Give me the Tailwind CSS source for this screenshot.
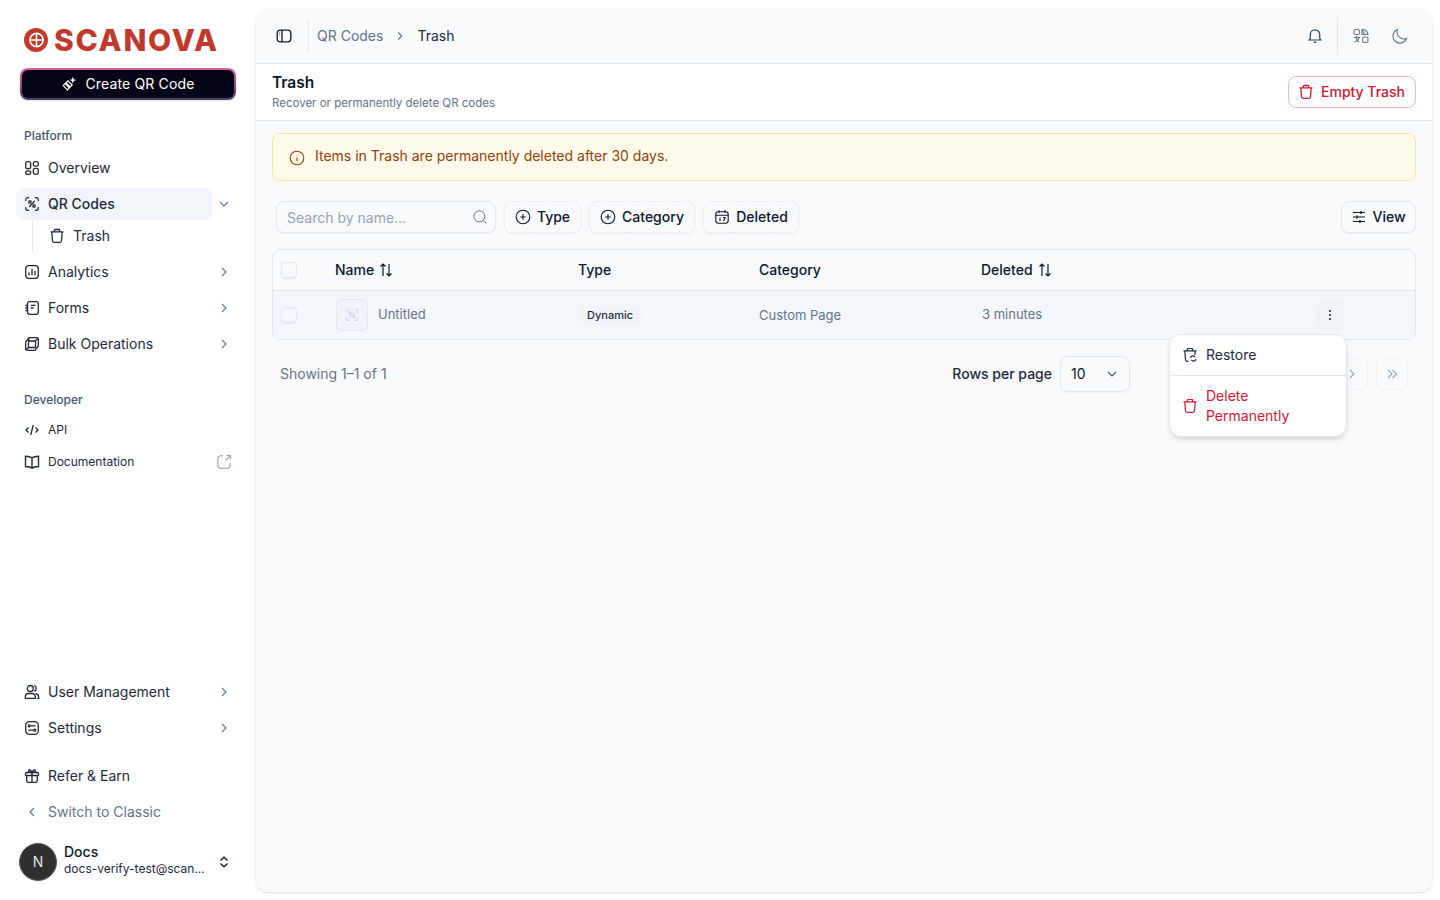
<!DOCTYPE html>
<html lang="en">
<head>
  <meta charset="UTF-8" />
  <meta name="viewport" content="width=device-width, initial-scale=1.0">
  <title>Trash - QR Codes</title>
  <script src="https://cdn.jsdelivr.net/npm/@tailwindcss/browser@4"></script>
</head>
<body class="bg-white text-[#0f172a] font-['Inter',sans-serif] overflow-hidden">

  <div class="flex h-[900px] w-[1440px]">

    <!-- Sidebar -->
    <aside class="flex h-full w-[256px] shrink-0 flex-col pl-4 pr-5">
      <!-- Logo -->
      <div class="mt-[28px] flex h-[24px] items-center gap-[6px] pl-2">
        <svg class="h-6 w-6 shrink-0" viewBox="0 0 24 24">
          <circle cx="12" cy="12" r="12" fill="#c0392b"/>
          <circle cx="12.500" cy="12" r="6.600" fill="none" stroke="#fff" stroke-width="1.600"/>
          <path d="M12.500 5v14M5.500 12h14" stroke="#fff" stroke-width="1.600"/>
        </svg>
        <span class="font-['Inter',sans-serif] text-[30px] font-extrabold leading-none tracking-[1.700px] text-[#c0392b]">SCANOVA</span>
      </div>

      <!-- Create -->
      <div class="ml-1 mt-4 h-8 w-[216px] rounded-lg bg-gradient-to-b from-[#d9609f] to-[#4b3a66] p-0.5 shadow-sm">
        <button class="flex h-7 w-full items-center justify-center gap-2 rounded-md bg-[#050517] text-sm font-normal tracking-[0.15px] text-white">
          <svg class="h-4 w-4" viewBox="0 0 16 16"><path d="M11.800.8l.9 2.400 2.400.9-2.400.9-.9 2.400-.9-2.400-2.400-.9 2.400-.9z" fill="#fff"/><path d="M7 4.800l4.200 4.200-2 2L5 6.800zM4.200 7.600l4.200 4.200-2 2-4.200-4.200z" fill="none" stroke="#fff" stroke-width="1.200"/></svg>
          Create QR Code
        </button>
      </div>

      <!-- Platform -->
      <div class="ml-2 mt-5 flex h-8 items-center text-xs font-medium text-[#475569]">Platform</div>
      <nav class="flex flex-col gap-1 text-sm text-[#1e293b]">
        <a class="flex h-8 items-center gap-2 px-2">
          <svg class="h-4 w-4 shrink-0" viewBox="0 0 16 16" fill="none" stroke="#1e293b" stroke-width="1.300"><rect x="1.700" y="1.700" width="5" height="7" rx="1.800"/><rect x="9.300" y="1.700" width="5" height="4.500" rx="1.800"/><rect x="1.700" y="10.800" width="5" height="3.600" rx="1.600"/><rect x="9.300" y="8.300" width="5" height="6" rx="1.800"/></svg>
          Overview
        </a>
        <div>
          <div class="flex items-center">
            <a class="flex h-8 w-[196px] items-center gap-2 rounded-lg bg-[#f1f5f9] px-2 font-medium">
              <svg class="h-4 w-4 shrink-0" viewBox="0 0 16 16" fill="none" stroke="#1e293b" stroke-width="1.200"><path d="M5 1.700H4A2.300 2.300 0 0 0 1.700 4v1M11 1.700h1A2.300 2.300 0 0 1 14.300 4v1M5 14.300H4A2.300 2.300 0 0 1 1.700 12v-1M11 14.300h1a2.300 2.300 0 0 0 2.300-2.300v-1"/><rect x="4.800" y="4.800" width="2.300" height="2.300" rx=".6"/><rect x="8.900" y="8.900" width="2.300" height="2.300" rx=".6"/><path d="M10.800 5L5.200 11"/></svg>
              QR Codes
            </a>
            <svg class="ml-1 h-4 w-4" viewBox="0 0 16 16" fill="none" stroke="#64748b" stroke-width="1.100"><path d="M4 6l4 4 4-4"/></svg>
          </div>
          <div class="ml-4 flex h-8 items-center gap-2 border-l border-[#e2e8f0] pl-4">
            <svg class="h-4 w-4 shrink-0" viewBox="0 0 16 16" fill="none" stroke="#1e293b" stroke-width="1.300"><path d="M1.500 3.800h13M5.300 3.500V2.300c0-.5.400-.8.800-.8h3.800c.4 0 .8.300.8.800v1.200M2.800 4l.7 8.800c.1.900.7 1.500 1.600 1.500h5.800c.9 0 1.500-.6 1.600-1.500l.7-8.800"/></svg>
            Trash
          </div>
        </div>
        <a class="flex h-8 items-center gap-2 pl-2 pr-1">
          <svg class="h-4 w-4 shrink-0" viewBox="0 0 16 16" fill="none" stroke="#1e293b" stroke-width="1.300"><rect x="1.700" y="1.700" width="12.600" height="12.600" rx="3"/><path d="M5 11.300V8.500M8 11.300V4.800M11 11.300V7"/></svg>
          <span class="flex-1">Analytics</span>
          <svg class="h-4 w-4" viewBox="0 0 16 16" fill="none" stroke="#64748b" stroke-width="1.100"><path d="M6 4l4 4-4 4"/></svg>
        </a>
        <a class="flex h-8 items-center gap-2 pl-2 pr-1">
          <svg class="h-4 w-4 shrink-0" viewBox="0 0 16 16" fill="none" stroke="#1e293b" stroke-width="1.300"><path d="M3.500 3.800c0-1.200.9-2.100 2.100-2.100h6.600c1.200 0 2.100.9 2.100 2.100v8.400c0 1.200-.9 2.100-2.100 2.100H5.600c-1.200 0-2.100-.9-2.100-2.100zM6.800 5.300h4.700M6.800 8h2.800M1.300 5.500h3M1.300 8h3M1.300 10.500h3"/></svg>
          <span class="flex-1">Forms</span>
          <svg class="h-4 w-4" viewBox="0 0 16 16" fill="none" stroke="#64748b" stroke-width="1.100"><path d="M6 4l4 4-4 4"/></svg>
        </a>
        <a class="flex h-8 items-center gap-2 pl-2 pr-1">
          <svg class="h-4 w-4 shrink-0" viewBox="0 0 16 16" fill="none" stroke="#1e293b" stroke-width="1.300"><path d="M5 1.700h7.300c1.100 0 2 .9 2 2V10l-3.300 4.300H3.700c-1.100 0-2-.9-2-2V6z"/><path d="M4.500 5h7v6.500h-7zM11.500 5l2.800-3.300M4.500 11.500l-2.800 2.800M4.500 5L5 1.700"/></svg>
          <span class="flex-1">Bulk Operations</span>
          <svg class="h-4 w-4" viewBox="0 0 16 16" fill="none" stroke="#64748b" stroke-width="1.100"><path d="M6 4l4 4-4 4"/></svg>
        </a>
      </nav>

      <!-- Developer -->
      <div class="ml-2 mt-6 flex h-[30px] items-center pt-0.5 text-xs font-medium text-[#475569]">Developer</div>
      <nav class="flex flex-col text-xs text-[#1e293b]">
        <a class="flex h-8 items-center gap-2 px-2">
          <svg class="h-4 w-4 shrink-0" viewBox="0 0 16 16" fill="none" stroke="#1e293b" stroke-width="1.300"><path d="M4.500 5.500L2 8l2.500 2.500M11.500 5.500L14 8l-2.500 2.500M9.300 3L6.700 13"/></svg>
          API
        </a>
        <a class="flex h-8 items-center gap-2 pl-2 pr-1">
          <svg class="h-4 w-4 shrink-0" viewBox="0 0 16 16" fill="none" stroke="#1e293b" stroke-width="1.400"><path d="M8 4C6.800 2.700 4.500 2.200 1.500 2.200v10.300c3 0 5.300.5 6.500 1.800 1.200-1.300 3.500-1.800 6.500-1.800V2.200c-3 0-5.300.5-6.500 1.800zM8 4v10.300"/></svg>
          <span class="flex-1">Documentation</span>
          <svg class="h-4 w-4 shrink-0" viewBox="0 0 16 16" fill="none" stroke="#94a3b8" stroke-width="1.100"><path d="M7 1.800H5c-1.800 0-3.200 1.400-3.200 3.200v6c0 1.800 1.400 3.200 3.200 3.200h6c1.800 0 3.200-1.400 3.200-3.200V9M10.500 1.500h4v4M14.500 1.500L10 6"/></svg>
        </a>
      </nav>

      <!-- Bottom -->
      <nav class="mt-auto flex flex-col gap-1 text-sm text-[#1e293b]">
        <a class="flex h-8 items-center gap-2 pl-2 pr-1">
          <svg class="h-4 w-4 shrink-0" viewBox="0 0 16 16" fill="none" stroke="#1e293b" stroke-width="1.300"><circle cx="6.300" cy="4.500" r="3"/><path d="M10.300 1.700a3 3 0 0 1 0 5.600M1.300 14.300v-1.300c0-2 1.600-3.500 3.500-3.500h3c2 0 3.500 1.500 3.500 3.500v1.300zM11.500 9.600c1.800.3 3.200 1.600 3.200 3.400v1.300h-1.500"/></svg>
          <span class="flex-1">User Management</span>
          <svg class="h-4 w-4" viewBox="0 0 16 16" fill="none" stroke="#64748b" stroke-width="1.100"><path d="M6 4l4 4-4 4"/></svg>
        </a>
        <a class="flex h-8 items-center gap-2 pl-2 pr-1">
          <svg class="h-4 w-4 shrink-0" viewBox="0 0 16 16" fill="none" stroke="#1e293b" stroke-width="1.300"><rect x="1.700" y="1.700" width="12.600" height="12.600" rx="3.500"/><path d="M7 5.800h4.500M4.500 10.200H9"/><circle cx="5.300" cy="5.800" r="1"/><circle cx="10.700" cy="10.200" r="1"/></svg>
          <span class="flex-1">Settings</span>
          <svg class="h-4 w-4" viewBox="0 0 16 16" fill="none" stroke="#64748b" stroke-width="1.100"><path d="M6 4l4 4-4 4"/></svg>
        </a>
        <a class="mt-3 flex h-8 items-center gap-2 px-2">
          <svg class="h-4 w-4 shrink-0" viewBox="0 0 16 16" fill="none" stroke="#1e293b" stroke-width="1.300"><rect x="1.500" y="4.500" width="13" height="3" rx="1"/><path d="M2.700 7.500v5c0 1 .8 1.800 1.800 1.800h7c1 0 1.800-.8 1.800-1.800v-5M8 4.500v9.800M8 4.500C6.500 4.500 4.500 4 4.500 2.800c0-1.500 2.500-1.500 3.500 1.700 1-3.200 3.500-3.200 3.500-1.700 0 1.200-2 1.700-3.500 1.700z"/></svg>
          Refer &amp; Earn
        </a>
        <a class="flex h-8 items-center gap-2 px-2 text-[#64748b]">
          <svg class="h-4 w-4 shrink-0" viewBox="0 0 16 16" fill="none" stroke="#64748b" stroke-width="1.200"><path d="M10 4L6 8l4 4"/></svg>
          Switch to Classic
        </a>
      </nav>

      <!-- User -->
      <div class="mb-[19px] mt-[15px] flex items-center">
        <div class="ml-[3px] flex h-[38px] w-[38px] shrink-0 items-center justify-center rounded-full border border-[#5a5a5a] bg-[#2f2f2f] text-sm text-[#e5e5e5]">N</div>
        <div class="-mt-1 ml-[7px] min-w-0 flex-1">
          <div class="text-sm font-medium leading-[18px]">Docs</div>
          <div class="whitespace-nowrap text-xs leading-4 text-[#1e293b]">docs-verify-test@scan...</div>
        </div>
        <svg class="mr-1 h-4 w-4" viewBox="0 0 16 16" fill="none" stroke="#0f172a" stroke-width="1.400"><path d="M4.500 6.500L8 3.200 11.500 6.500M4.500 9.500L8 12.800 11.500 9.500"/></svg>
      </div>
    </aside>

    <!-- Main panel -->
    <main class="my-2 mr-2 flex flex-1 flex-col rounded-xl bg-[#f8fafc] shadow-sm">

      <!-- Top bar -->
      <header class="flex h-14 shrink-0 items-center border-b border-[#e2e8f0] pl-5 pr-6">
        <svg class="h-4 w-4" viewBox="0 0 16 16" fill="none" stroke="#0f172a" stroke-width="1.300"><rect x="1.200" y="2.200" width="13.600" height="11.600" rx="3"/><path d="M6 2.200v11.600M3.500 5h.6M3.500 7.200h.6"/></svg>
        <div class="ml-4 h-8 w-px bg-[#e2e8f0]"></div>
        <span class="ml-2 text-sm text-[#64748b]">QR Codes</span>
        <svg class="ml-2.5 h-3.5 w-3.5" viewBox="0 0 16 16" fill="none" stroke="#64748b" stroke-width="1.300"><path d="M6 4l4 4-4 4"/></svg>
        <span class="ml-2.5 text-sm text-[#1e293b]">Trash</span>
        <div class="ml-auto flex items-center">
          <svg class="h-4 w-4" viewBox="0 0 16 16" fill="none" stroke="#334155" stroke-width="1.200"><path d="M2.300 12c.8-.8 1-1.500 1-3V6.500a4.700 4.700 0 0 1 9.400 0V9c0 1.500.2 2.200 1 3z"/><path d="M6.800 14.200h2.400" stroke-width="1.500"/></svg>
          <div class="ml-[14px] h-[38px] w-px bg-[#e2e8f0]"></div>
          <svg class="ml-[15px] h-4 w-4" viewBox="0 0 16 16" fill="none" stroke="#64748b" stroke-width="1.100"><rect x="1" y="1.500" width="5.500" height="5" rx="1.500"/><path d="M9 1.500c3 0 5.500 2 6 5H9zM9 1.500c1 1.500 2 3 2.500 5M1 9.500h6M3.500 8v1.500M3 9.500c.3 2 1.500 3.500 3 4.500M6 9.500c-.3 2-1.700 3.500-4.500 4.500"/><rect x="9.500" y="9" width="5.500" height="5.500" rx="1.500"/></svg>
          <svg class="ml-[23px] h-4 w-4" viewBox="0 0 16 16" fill="none" stroke="#64748b" stroke-width="1.100"><path d="M14.500 10.500A7 7 0 0 1 5.500 1.500a7 7 0 1 0 9 9z"/></svg>
        </div>
      </header>

      <!-- Title -->
      <section class="flex h-[57px] shrink-0 items-center justify-between border-b border-[#e2e8f0] bg-white px-4">
        <div class="-mt-0.5">
          <h1 class="text-[15.5px] font-semibold leading-6 text-[#0f172a]">Trash</h1>
          <p class="text-[11.5px] leading-4 text-[#64748b]">Recover or permanently delete QR codes</p>
        </div>
        <button class="flex h-8 w-[128px] items-center justify-center gap-[7px] rounded-lg border border-[#f0b9c2] bg-white pr-px text-sm font-medium text-[#d6142f]">
          <svg class="h-4 w-4" viewBox="0 0 16 16" fill="none" stroke="#d6142f" stroke-width="1.300"><path d="M1.500 3.800h13M5.300 3.500V2.300c0-.5.400-.8.800-.8h3.800c.4 0 .8.300.8.800v1.200M2.800 4l.7 8.800c.1.900.7 1.500 1.600 1.500h5.800c.9 0 1.500-.6 1.600-1.500l.7-8.800"/></svg>
          Empty Trash
        </button>
      </section>

      <div class="relative flex-1 px-4 pt-3">
        <!-- Notice -->
        <div class="flex h-12 items-center gap-[10px] rounded-lg border border-[#f8e6a0] bg-[#fefbea] pl-4 text-sm text-[#92400e]">
          <svg class="mt-0.5 h-4 w-4 shrink-0" viewBox="0 0 16 16" fill="none" stroke="#92400e" stroke-width="1.100"><circle cx="8" cy="8" r="6.800"/><path d="M8 7.500v3.500M8 5v.5"/></svg>
          <span class="-mt-0.5">Items in Trash are permanently deleted after 30 days.</span>
        </div>

        <!-- Filters -->
        <div class="mt-5 flex h-8 items-center gap-2 pl-1 text-sm font-medium">
          <div class="flex h-8 w-[220px] items-center justify-between rounded-lg border border-[#e2e8f0] pl-[10px] pr-[7px] font-normal text-[#94a3b8] shadow-xs">
            <span class="mt-0.5">Search by name...</span>
            <svg class="h-4 w-4" viewBox="0 0 16 16" fill="none" stroke="#64748b" stroke-width="1"><circle cx="7.300" cy="7.300" r="5.500"/><path d="M11.500 11.500l2.800 2.800"/></svg>
          </div>
          <button class="flex h-8 w-[77px] items-center justify-center gap-1.5 rounded-lg border border-dashed border-[#e2e8f0] shadow-xs">
            <svg class="h-4 w-4" viewBox="0 0 16 16" fill="none" stroke="#0f172a" stroke-width="1.100"><circle cx="8" cy="8" r="6.800"/><path d="M8 5.300v5.400M5.300 8h5.400"/></svg>
            Type
          </button>
          <button class="flex h-8 w-[106px] items-center justify-center gap-1.5 rounded-lg border border-dashed border-[#e2e8f0] shadow-xs">
            <svg class="h-4 w-4" viewBox="0 0 16 16" fill="none" stroke="#0f172a" stroke-width="1.100"><circle cx="8" cy="8" r="6.800"/><path d="M8 5.300v5.400M5.300 8h5.400"/></svg>
            Category
          </button>
          <button class="flex h-8 w-[96px] items-center justify-center gap-1.5 rounded-lg border border-dashed border-[#e2e8f0] shadow-xs">
            <svg class="h-4 w-4" viewBox="0 0 16 16" fill="none" stroke="#0f172a" stroke-width="1.100"><rect x="1.800" y="2.700" width="12.400" height="11.600" rx="2.500"/><path d="M1.800 6.300h12.400M5 1.300v2.600M11 1.300v2.600M6 8.500v3.500M9 8.500h2l-1.300 3.500"/></svg>
            Deleted
          </button>
          <button class="ml-auto flex h-8 w-[75px] items-center justify-center gap-[5px] rounded-lg border border-[#e2e8f0] shadow-xs">
            <svg class="h-4 w-4" viewBox="0 0 16 16" fill="none" stroke="#0f172a" stroke-width="1.100"><path d="M2 3.500h12M2 8h12M2 12.500h12"/><path d="M10 2v3M6 6.500v3M9 11v3" stroke-width="1.300"/></svg>
            View
          </button>
        </div>

        <!-- Table -->
        <div class="mt-4 overflow-hidden rounded-lg border border-[#e2e8f0] text-sm">
          <div class="grid h-[41px] grid-cols-[62px_243px_181px_222px_1fr] items-center border-b border-[#e2e8f0] font-medium">
            <div class="pl-2"><div class="h-4 w-4 rounded border border-[#e2e8f0] shadow-xs"></div></div>
            <div class="flex items-center gap-1">Name
              <svg class="h-4 w-4" viewBox="0 0 16 16" fill="none" stroke="#0f172a" stroke-width="1.200"><path d="M5 14V2M2.500 4.500L5 2l2.500 2.500M11 2v12M8.500 11.500L11 14l2.500-2.500"/></svg>
            </div>
            <div>Type</div>
            <div>Category</div>
            <div class="flex items-center gap-1">Deleted
              <svg class="h-4 w-4" viewBox="0 0 16 16" fill="none" stroke="#0f172a" stroke-width="1.200"><path d="M5 14V2M2.500 4.500L5 2l2.500 2.500M11 2v12M8.500 11.500L11 14l2.500-2.500"/></svg>
            </div>
          </div>
          <div class="grid h-[48px] grid-cols-[62px_243px_181px_222px_1fr] items-center bg-[#f4f7fb] text-[13px] text-[#64748b]">
            <div class="pl-2"><div class="h-4 w-4 rounded border border-[#e2e8f0] shadow-xs"></div></div>
            <div class="flex items-center gap-2.5">
              <div class="ml-px flex h-8 w-8 items-center justify-center rounded-md border border-[#e2e8f0] bg-[#f1f5f9]">
                <svg class="h-3.5 w-3.5" viewBox="0 0 16 16" fill="none" stroke="#cbd5e1" stroke-width="1.200"><path d="M5 1.700H4A2.300 2.300 0 0 0 1.700 4v1M11 1.700h1A2.300 2.300 0 0 1 14.300 4v1M5 14.300H4A2.300 2.300 0 0 1 1.700 12v-1M11 14.300h1a2.300 2.300 0 0 0 2.300-2.300v-1"/><rect x="4.800" y="4.800" width="2.300" height="2.300" rx=".6"/><rect x="8.900" y="8.900" width="2.300" height="2.300" rx=".6"/><path d="M10.800 5L5.200 11"/></svg>
              </div>
              <span class="-mt-0.5">Untitled</span>
            </div>
            <div><span class="inline-block rounded-md bg-[#f1f5f9] px-[9px] py-0.5 text-[11px] font-medium text-[#1e293b]">Dynamic</span></div>
            <div>Custom Page</div>
            <div class="flex items-center justify-between pl-px">
              <span class="-mt-0.5">3 minutes</span>
              <span class="mr-[71px] flex h-7 w-7 items-center justify-center rounded-md bg-[#eff3f8]">
                <svg class="h-4 w-4" viewBox="0 0 16 16" fill="#0f172a"><circle cx="8" cy="4" r="1"/><circle cx="8" cy="8" r="1"/><circle cx="8" cy="12" r="1"/></svg>
              </span>
            </div>
          </div>
        </div>

        <!-- Pagination -->
        <div class="mt-4 flex h-9 items-center px-2 text-sm">
          <span class="text-[#64748b]">Showing 1–1 of 1</span>
          <span class="ml-auto mr-2 font-medium text-[#1e293b]">Rows per page</span>
          <div class="mr-[206px] flex h-9 w-[70px] items-center justify-between rounded-lg border border-[#e2e8f0] pl-[10px] pr-[9px] shadow-xs">
            10
            <svg class="h-4 w-4" viewBox="0 0 16 16" fill="none" stroke="#475569" stroke-width="1.200"><path d="M4 6l4 4 4-4"/></svg>
          </div>
          <div class="flex h-8 w-8 items-center justify-center rounded-lg border border-[#eef2f6]">
            <svg class="h-4 w-4" viewBox="0 0 16 16" fill="none" stroke="#94a3b8" stroke-width="1.100"><path d="M6 4l4 4-4 4"/></svg>
          </div>
          <div class="ml-2 flex h-8 w-8 items-center justify-center rounded-lg border border-[#eef2f6]">
            <svg class="h-4 w-4" viewBox="0 0 16 16" fill="none" stroke="#94a3b8" stroke-width="1.100"><path d="M4 4l4 4-4 4M8.500 4l4 4-4 4"/></svg>
          </div>
        </div>

        <!-- Row menu -->
        <div class="absolute left-[913px] top-[213px] w-[178px] rounded-xl border border-[#e2e8f0] bg-white text-sm shadow-md">
          <div class="flex h-10 items-center gap-2 pl-3">
            <svg class="h-4 w-4 shrink-0" viewBox="0 0 16 16" fill="none" stroke="#1e293b" stroke-width="1.200"><path d="M1.500 3.800h13M5.300 3.500V2.300c0-.5.400-.8.800-.8h3.800c.4 0 .8.300.8.800v1.200M2.800 4l.7 8.800c.1.900.7 1.500 1.600 1.500h1.400M13.200 4l-.3 4M8.500 11a2.500 2.500 0 0 1 4.700-.8M14 12a2.500 2.500 0 0 1-4.700.8"/></svg>
            <span class="text-[#1e293b]">Restore</span>
          </div>
          <div class="h-px bg-[#e2e8f0]"></div>
          <div class="flex h-[60px] items-center gap-2 pl-3 leading-5 text-[#d6142f]">
            <svg class="h-4 w-4 shrink-0" viewBox="0 0 16 16" fill="none" stroke="#d6142f" stroke-width="1.200"><path d="M1.500 3.800h13M5.300 3.500V2.300c0-.5.400-.8.800-.8h3.800c.4 0 .8.300.8.800v1.200M2.800 4l.7 8.800c.1.900.7 1.500 1.600 1.500h5.800c.9 0 1.500-.6 1.600-1.500l.7-8.800"/></svg>
            <span>Delete<br>Permanently</span>
          </div>
        </div>
      </div>
    </main>
  </div>

</body>
</html>
